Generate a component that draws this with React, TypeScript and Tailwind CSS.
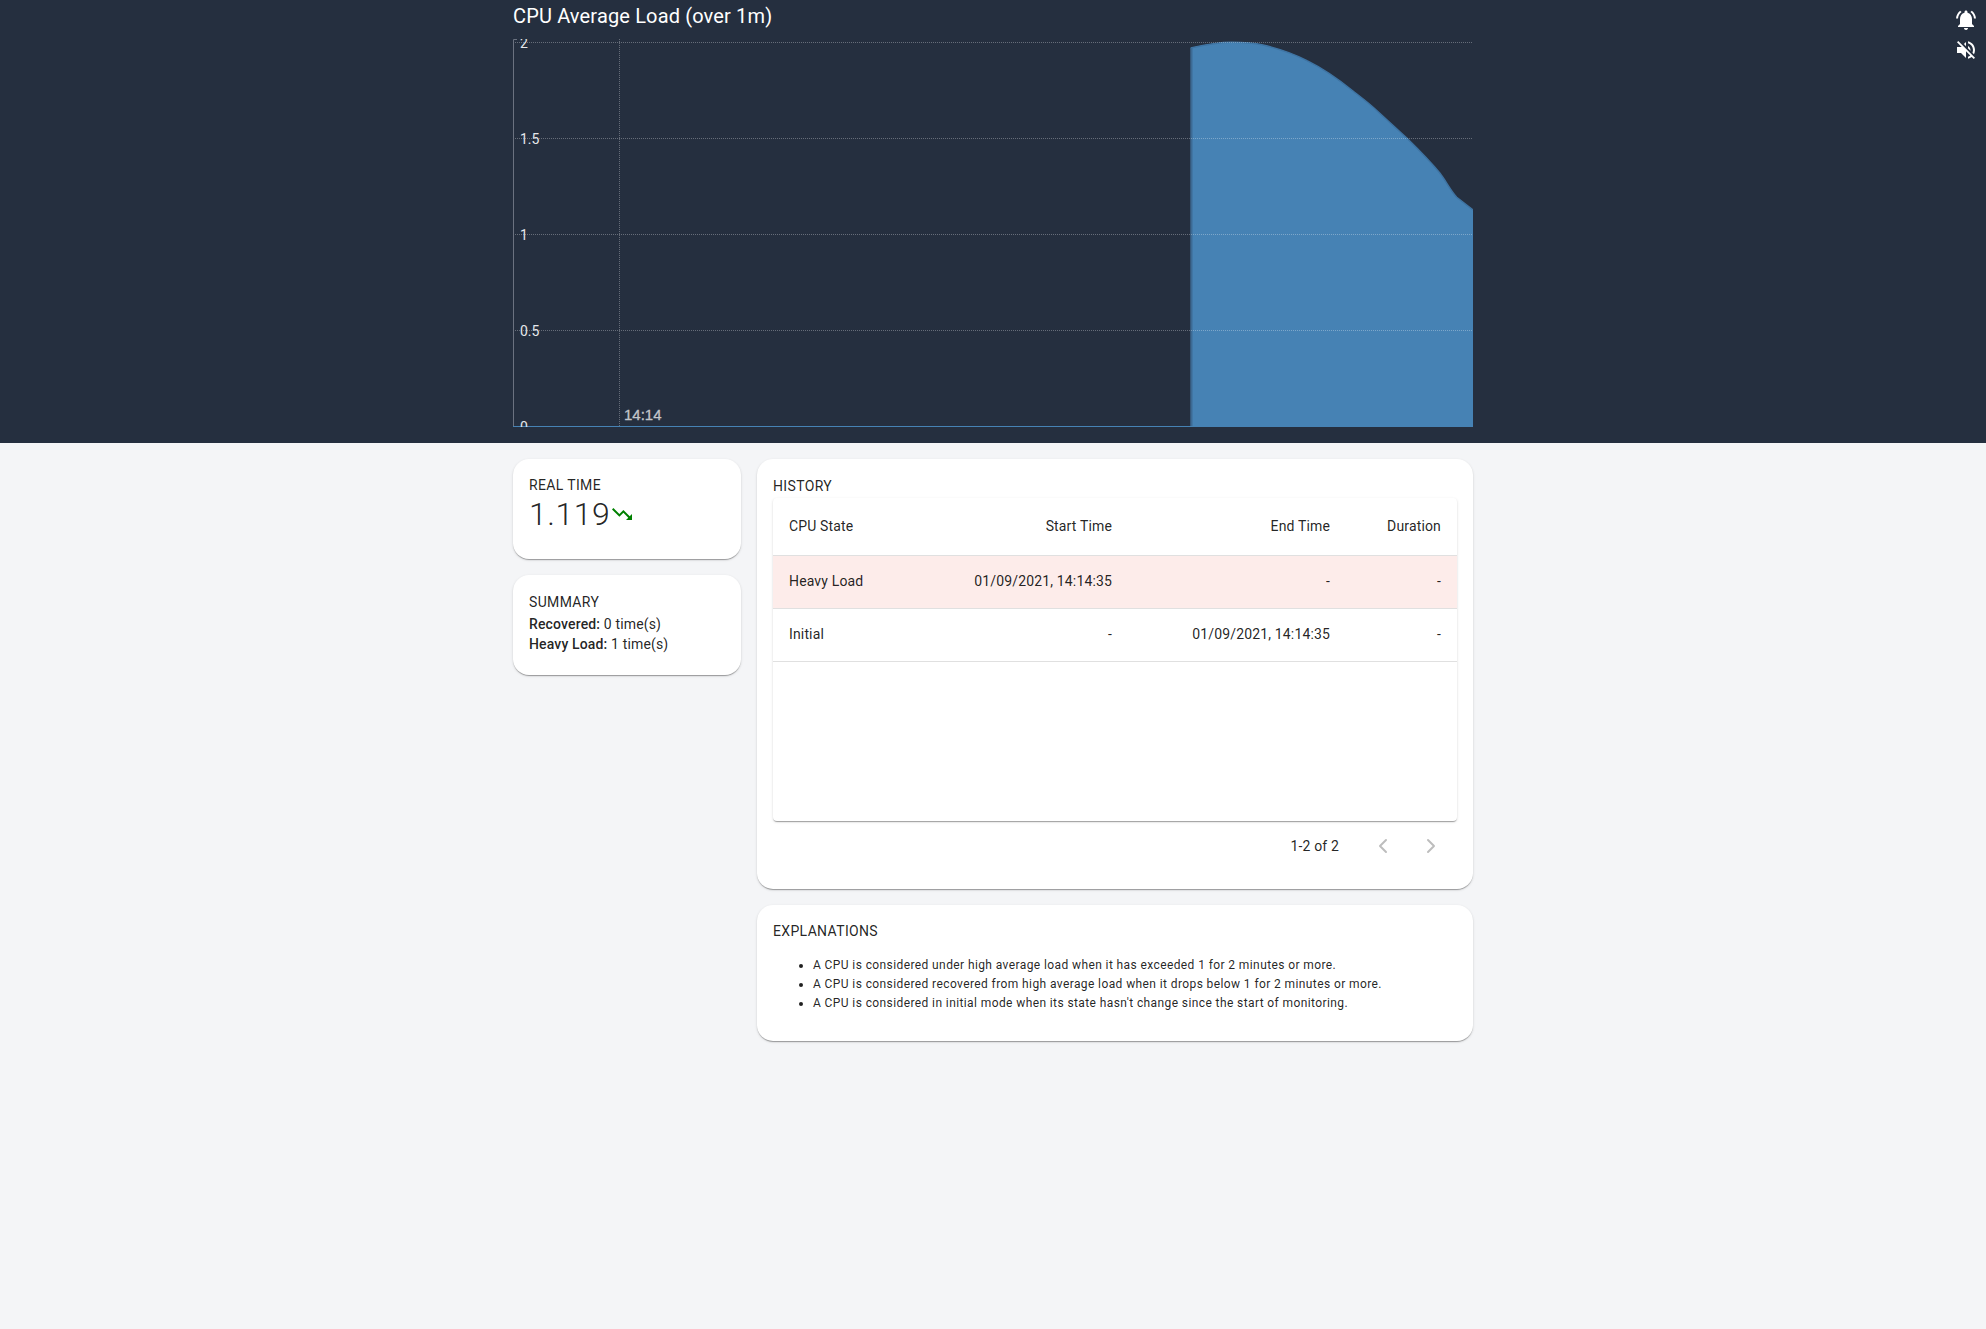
import React from 'react';
import { ChevronLeft, ChevronRight } from 'lucide-react';

const paperClass =
  'bg-white rounded-2xl p-4 shadow-[0_2px_1px_-1px_rgba(0,0,0,0.2),0_1px_1px_0_rgba(0,0,0,0.14),0_1px_3px_0_rgba(0,0,0,0.12)]';

const areaTop =
  'M1190.7 48 C1204 45 1216 42.3 1232 42.3 C1242 42.3 1252 42.6 1263 45 C1284 50 1296 55 1307 60.7 C1324 69 1338 79 1353 91 C1362 98 1370 104 1377 110.7 L1407 138.3 C1420 151 1430 161 1440 173.3 C1446 181 1450 190 1456.7 197.3 L1473 210';

const yTicks = [
  { label: '2', y: 42.5 },
  { label: '1.5', y: 138.5 },
  { label: '1', y: 234.5 },
  { label: '0.5', y: 330.5 },
  { label: '0', y: 426.5 },
];

const rows = [
  { state: 'Heavy Load', start: '01/09/2021, 14:14:35', end: '-', duration: '-', alert: true },
  { state: 'Initial', start: '-', end: '01/09/2021, 14:14:35', duration: '-', alert: false },
];

const notes = [
  'A CPU is considered under high average load when it has exceeded 1 for 2 minutes or more.',
  'A CPU is considered recovered from high average load when it drops below 1 for 2 minutes or more.',
  "A CPU is considered in initial mode when its state hasn't change since the start of monitoring.",
];

function LoadChart() {
  return (
    <svg viewBox="513 39 960 388" width={960} height={388} className="block">
      {/* area */}
      <path d={`${areaTop} L1473 427 L1190.7 427 Z`} fill="#4682b4" />
      <path d={areaTop} fill="none" stroke="#3f74a3" strokeWidth={1.5} />
      <path d="M1191.5 48 L1191.5 427" stroke="#3c6a94" strokeWidth={2} />

      {/* grid */}
      {yTicks.slice(0, 4).map((t) => (
        <line key={t.label} x1={513} x2={1472} y1={t.y} y2={t.y} stroke="#ffffff" strokeOpacity={0.3} strokeDasharray="1 1" />
      ))}
      <line x1={619.5} x2={619.5} y1={39} y2={427} stroke="#ffffff" strokeOpacity={0.3} strokeDasharray="1 1" />

      {/* axes */}
      <path d="M517 39.5 L513.5 39.5 L513.5 426.5" fill="none" stroke="#6b7280" />
      <line x1={513} x2={1473} y1={426.5} y2={426.5} stroke="#4682b4" />

      {yTicks.map((t) => (
        <text key={t.label} x={520} y={t.y + 5} fontSize={14} fill="#e5e7eb" fontFamily="Roboto, sans-serif">
          {t.label}
        </text>
      ))}
      <text x={624} y={419.5} fontSize={15} fill="#c4c6ca" stroke="#c4c6ca" strokeWidth={0.3} fontFamily="'Liberation Sans', sans-serif">
        14:14
      </text>
    </svg>
  );
}

export default function App() {
  return (
    <div className="min-h-screen bg-[#f4f5f7] font-['Roboto',sans-serif] text-[#000000de] text-sm">
      {/* Header */}
      <div className="relative bg-[#252f3f] pb-4">
        <div className="w-[960px] ml-[513px]">
          <h1 className="h-[39px] pt-[3px] text-[20px] leading-[26px] tracking-[0.15px] text-white">CPU Average Load (over 1m)</h1>
          <LoadChart />
        </div>
        <div className="absolute top-[8px] right-[8px] flex flex-col gap-[6px] text-white">
          <svg viewBox="0 0 24 24" className="w-6 h-6 fill-current">
            <path d="M7.58 4.08L6.15 2.65C3.75 4.48 2.17 7.3 2.03 10.5h2c.15-2.65 1.51-4.97 3.55-6.42zm12.39 6.42h2c-.15-3.2-1.73-6.02-4.12-7.85l-1.42 1.43c2.02 1.45 3.39 3.77 3.54 6.42zM18 11c0-3.07-1.64-5.64-4.5-6.32V4c0-.83-.67-1.5-1.5-1.5s-1.5.67-1.5 1.5v.68C7.63 5.36 6 7.92 6 11v5l-2 2v1h16v-1l-2-2v-5zm-6 11c.14 0 .27-.01.4-.04.65-.14 1.18-.58 1.44-1.18.1-.24.15-.5.15-.78h-4c.01 1.1.9 2 2.01 2z" />
          </svg>
          <svg viewBox="0 0 24 24" className="w-6 h-6 fill-current">
            <path d="M16.5 12c0-1.77-1.02-3.29-2.5-4.03v2.21l2.45 2.45c.03-.2.05-.41.05-.63zm2.5 0c0 .94-.2 1.82-.54 2.64l1.51 1.51C20.63 14.91 21 13.5 21 12c0-4.28-2.99-7.86-7-8.77v2.06c2.89.86 5 3.54 5 6.71zM4.27 3L3 4.27 7.73 9H3v6h4l5 5v-6.73l4.25 4.25c-.67.52-1.42.93-2.25 1.18v2.06c1.38-.31 2.63-.95 3.69-1.81L19.73 21 21 19.73l-9-9L4.27 3zM12 4L9.91 6.09 12 8.18V4z" />
          </svg>
        </div>
      </div>

      {/* Body */}
      <div className="w-[960px] ml-[513px] mt-4 flex gap-4 items-start">
        <div className="w-[228px] flex flex-col gap-4">
          <div className={`${paperClass} h-[100px]`}>
            <div className="leading-[21px] tracking-[0.35px]">REAL TIME</div>
            <div className="flex items-start">
              <span className="text-[32px] leading-[36px] font-light tracking-[0.5px]">1.119</span>
              <svg viewBox="0 0 24 24" className="w-6 h-6 fill-[#008000] mt-[6px]">
                <path d="M16 18l2.29-2.29-4.88-4.88-4 4L2 7.41 3.41 6l6 6 4-4 6.3 6.29L22 12v6z" />
              </svg>
            </div>
          </div>
          <div className={`${paperClass} h-[100px]`}>
            <div className="pt-px leading-[21px] tracking-[0.35px]">SUMMARY</div>
            <div className="pt-px leading-[20px] tracking-[0.15px]">
              <b className="font-medium">Recovered:</b> 0 time(s)
            </div>
            <div className="leading-[20px] tracking-[0.15px]">
              <b className="font-medium">Heavy Load:</b> 1 time(s)
            </div>
          </div>
        </div>

        <div className="w-[716px] flex flex-col gap-4">
          <div className={paperClass}>
            <div className="leading-[23px] tracking-[0.35px]">HISTORY</div>
            <div className="h-[323px] rounded bg-white shadow-[0_2px_1px_-1px_rgba(0,0,0,0.2),0_1px_1px_0_rgba(0,0,0,0.14),0_1px_3px_0_rgba(0,0,0,0.12)] overflow-hidden">
              <div className="grid grid-cols-[160px_195px_218px_111px] h-[58px] pb-[2px] items-center border-b border-[#e0e0e0] tracking-[0.15px]">
                <div className="pl-4">CPU State</div>
                <div className="pr-4 text-right">Start Time</div>
                <div className="pr-4 text-right">End Time</div>
                <div className="pr-4 text-right">Duration</div>
              </div>
              {rows.map((r) =>
                r.alert ? (
                  <div key={r.state} className="grid grid-cols-[160px_195px_218px_111px] h-[53px] pb-[2px] items-center border-b border-[#e0e0e0] bg-[#fdecea] tracking-[0.15px]">
                    <div className="pl-4">{r.state}</div>
                    <div className="pr-4 text-right">{r.start}</div>
                    <div className="pr-4 text-right">{r.end}</div>
                    <div className="pr-4 text-right">{r.duration}</div>
                  </div>
                ) : (
                  <div key={r.state} className="grid grid-cols-[160px_195px_218px_111px] h-[53px] pb-[2px] items-center border-b border-[#e0e0e0] tracking-[0.15px]">
                    <div className="pl-4">{r.state}</div>
                    <div className="pr-4 text-right">{r.start}</div>
                    <div className="pr-4 text-right">{r.end}</div>
                    <div className="pr-4 text-right">{r.duration}</div>
                  </div>
                )
              )}
            </div>
            <div className="h-[52px] pb-[2px] flex items-center justify-end pr-[14px] tracking-[0.15px]">
              <span className="mr-[32px]">1-2 of 2</span>
              <ChevronLeft className="w-6 h-6 text-[#00000042]" strokeWidth={2} />
              <ChevronRight className="w-6 h-6 ml-6 text-[#00000042]" strokeWidth={2} />
            </div>
          </div>

          <div className={paperClass}>
            <div className="leading-[21px] tracking-[0.35px]">EXPLANATIONS</div>
            <ul className="list-disc pl-10 mt-[14px] mb-3 text-xs leading-[19px] tracking-[0.4px]">
              {notes.map((n) => (
                <li key={n}>{n}</li>
              ))}
            </ul>
          </div>
        </div>
      </div>
    </div>
  );
}
